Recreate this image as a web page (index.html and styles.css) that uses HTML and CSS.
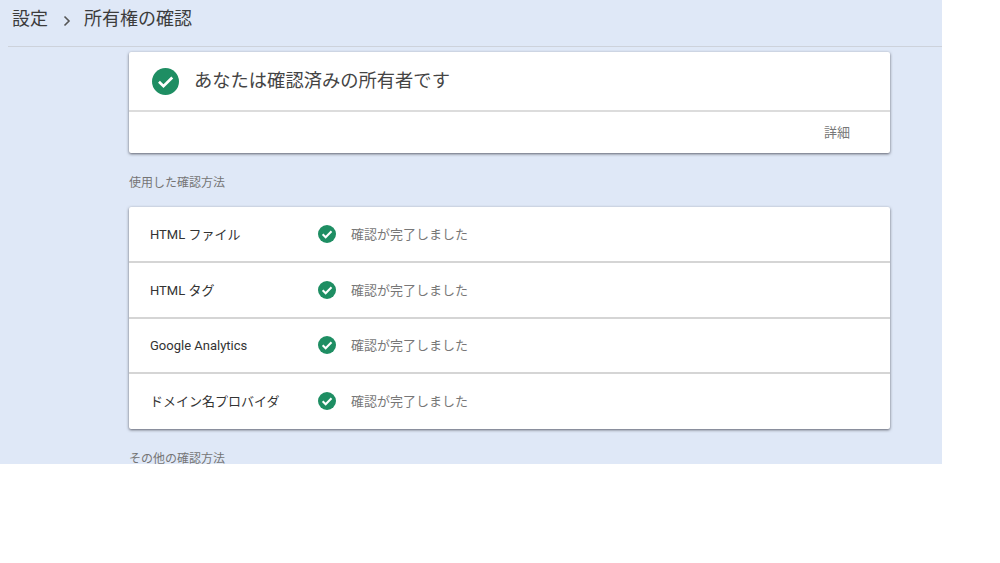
FILE: index.html

```html
<!DOCTYPE html>
<html lang="ja">
<head>
  <meta charset="UTF-8">
  <title>所有権の確認</title>
  <link rel="stylesheet" href="styles.css">
</head>
<body>
  <div class="page">
    <div class="breadcrumb">
      <span>設定</span>
      <svg class="chevron" viewBox="0 0 8 12" width="8" height="12"><path d="M1.5 1.5 6 6 1.5 10.500" fill="none" stroke="#555" stroke-width="1.6"/></svg>
      <span>所有権の確認</span>
    </div>

    <main class="content">
      <section class="card">
        <div class="owner">
          <svg class="check check-big" viewBox="0 0 24 24"><circle cx="12" cy="12" r="12" fill="#1e8e63"/><path d="M6.200 12.300 10.200 16.200 18 8.400" fill="none" stroke="#fff" stroke-width="2.400"/></svg>
          <span class="owner-text">あなたは確認済みの所有者です</span>
        </div>
        <div class="details"><span class="details-link">詳細</span></div>
      </section>

      <h2 class="section-title">使用した確認方法</h2>

      <section class="card">
        <div class="method">
          <span class="method-name">HTML ファイル</span>
          <svg class="check" viewBox="0 0 24 24"><circle cx="12" cy="12" r="12" fill="#1e8e63"/><path d="M6.200 12.300 10.200 16.200 18 8.400" fill="none" stroke="#fff" stroke-width="2.800"/></svg>
          <span class="method-status">確認が完了しました</span>
        </div>
        <div class="method">
          <span class="method-name">HTML タグ</span>
          <svg class="check" viewBox="0 0 24 24"><circle cx="12" cy="12" r="12" fill="#1e8e63"/><path d="M6.200 12.300 10.200 16.200 18 8.400" fill="none" stroke="#fff" stroke-width="2.800"/></svg>
          <span class="method-status">確認が完了しました</span>
        </div>
        <div class="method">
          <span class="method-name">Google Analytics</span>
          <svg class="check" viewBox="0 0 24 24"><circle cx="12" cy="12" r="12" fill="#1e8e63"/><path d="M6.200 12.300 10.200 16.200 18 8.400" fill="none" stroke="#fff" stroke-width="2.800"/></svg>
          <span class="method-status">確認が完了しました</span>
        </div>
        <div class="method">
          <span class="method-name">ドメイン名プロバイダ</span>
          <svg class="check" viewBox="0 0 24 24"><circle cx="12" cy="12" r="12" fill="#1e8e63"/><path d="M6.200 12.300 10.200 16.200 18 8.400" fill="none" stroke="#fff" stroke-width="2.800"/></svg>
          <span class="method-status">確認が完了しました</span>
        </div>
      </section>

      <h2 class="section-title">その他の確認方法</h2>
    </main>
  </div>
</body>
</html>
```

FILE: styles.css

```css
html, body {
  margin: 0;
  background: #fff;
}
body {
  font-family: Roboto, "Noto Sans CJK JP", sans-serif;
  height: 563px;
  overflow: hidden;
}
.page {
  width: 942px;
  height: 464px;
  background: #dfe8f7;
  overflow: hidden;
}
.breadcrumb {
  height: 46px;
  margin-left: 8px;
  padding-left: 4px;
  border-bottom: 1px solid #cdd2db;
  display: flex;
  align-items: flex-start;
  gap: 15px;
  font-size: 18px;
  line-height: 38px;
  color: #3c3c3c;
}
.chevron {
  margin-top: 15px;
  margin-right: -2px;
}
.content {
  width: 761px;
  margin: 5px 0 0 129px;
}
.card {
  background: #fff;
  border-radius: 2px;
  box-shadow: 0 1px 3px rgba(50, 50, 60, 0.75);
}
.owner {
  height: 58px;
  padding-left: 23px;
  display: flex;
  align-items: center;
  gap: 15px;
  font-size: 18.300px;
  color: #444;
  border-bottom: 2px solid #dcdcdc;
}
.owner-text {
  margin-bottom: 4px;
}
.details {
  height: 41px;
  padding-right: 40px;
  display: flex;
  align-items: center;
  justify-content: flex-end;
  font-size: 13px;
  color: #777;
}
.details-link {
  margin-bottom: 3px;
}
.section-title {
  margin: 0;
  font-size: 12px;
  font-weight: 400;
  line-height: 18px;
  color: #757575;
  padding-top: 21px;
  padding-bottom: 15px;
}
.method {
  height: 53.750px;
  padding-left: 21px;
  display: flex;
  align-items: center;
  border-bottom: 2px solid #d5d5d5;
}
.method:last-child {
  border-bottom: 0;
  height: 53px;
  padding-bottom: 2px;
}
.method-name {
  width: 168px;
  font-size: 13px;
  color: #333;
}
.check {
  width: 18px;
  height: 18px;
  flex: none;
}
.check-big {
  width: 27px;
  height: 27px;
}
.method-status {
  margin-left: 15px;
  margin-bottom: 1px;
  font-size: 13px;
  color: #777;
}
```
